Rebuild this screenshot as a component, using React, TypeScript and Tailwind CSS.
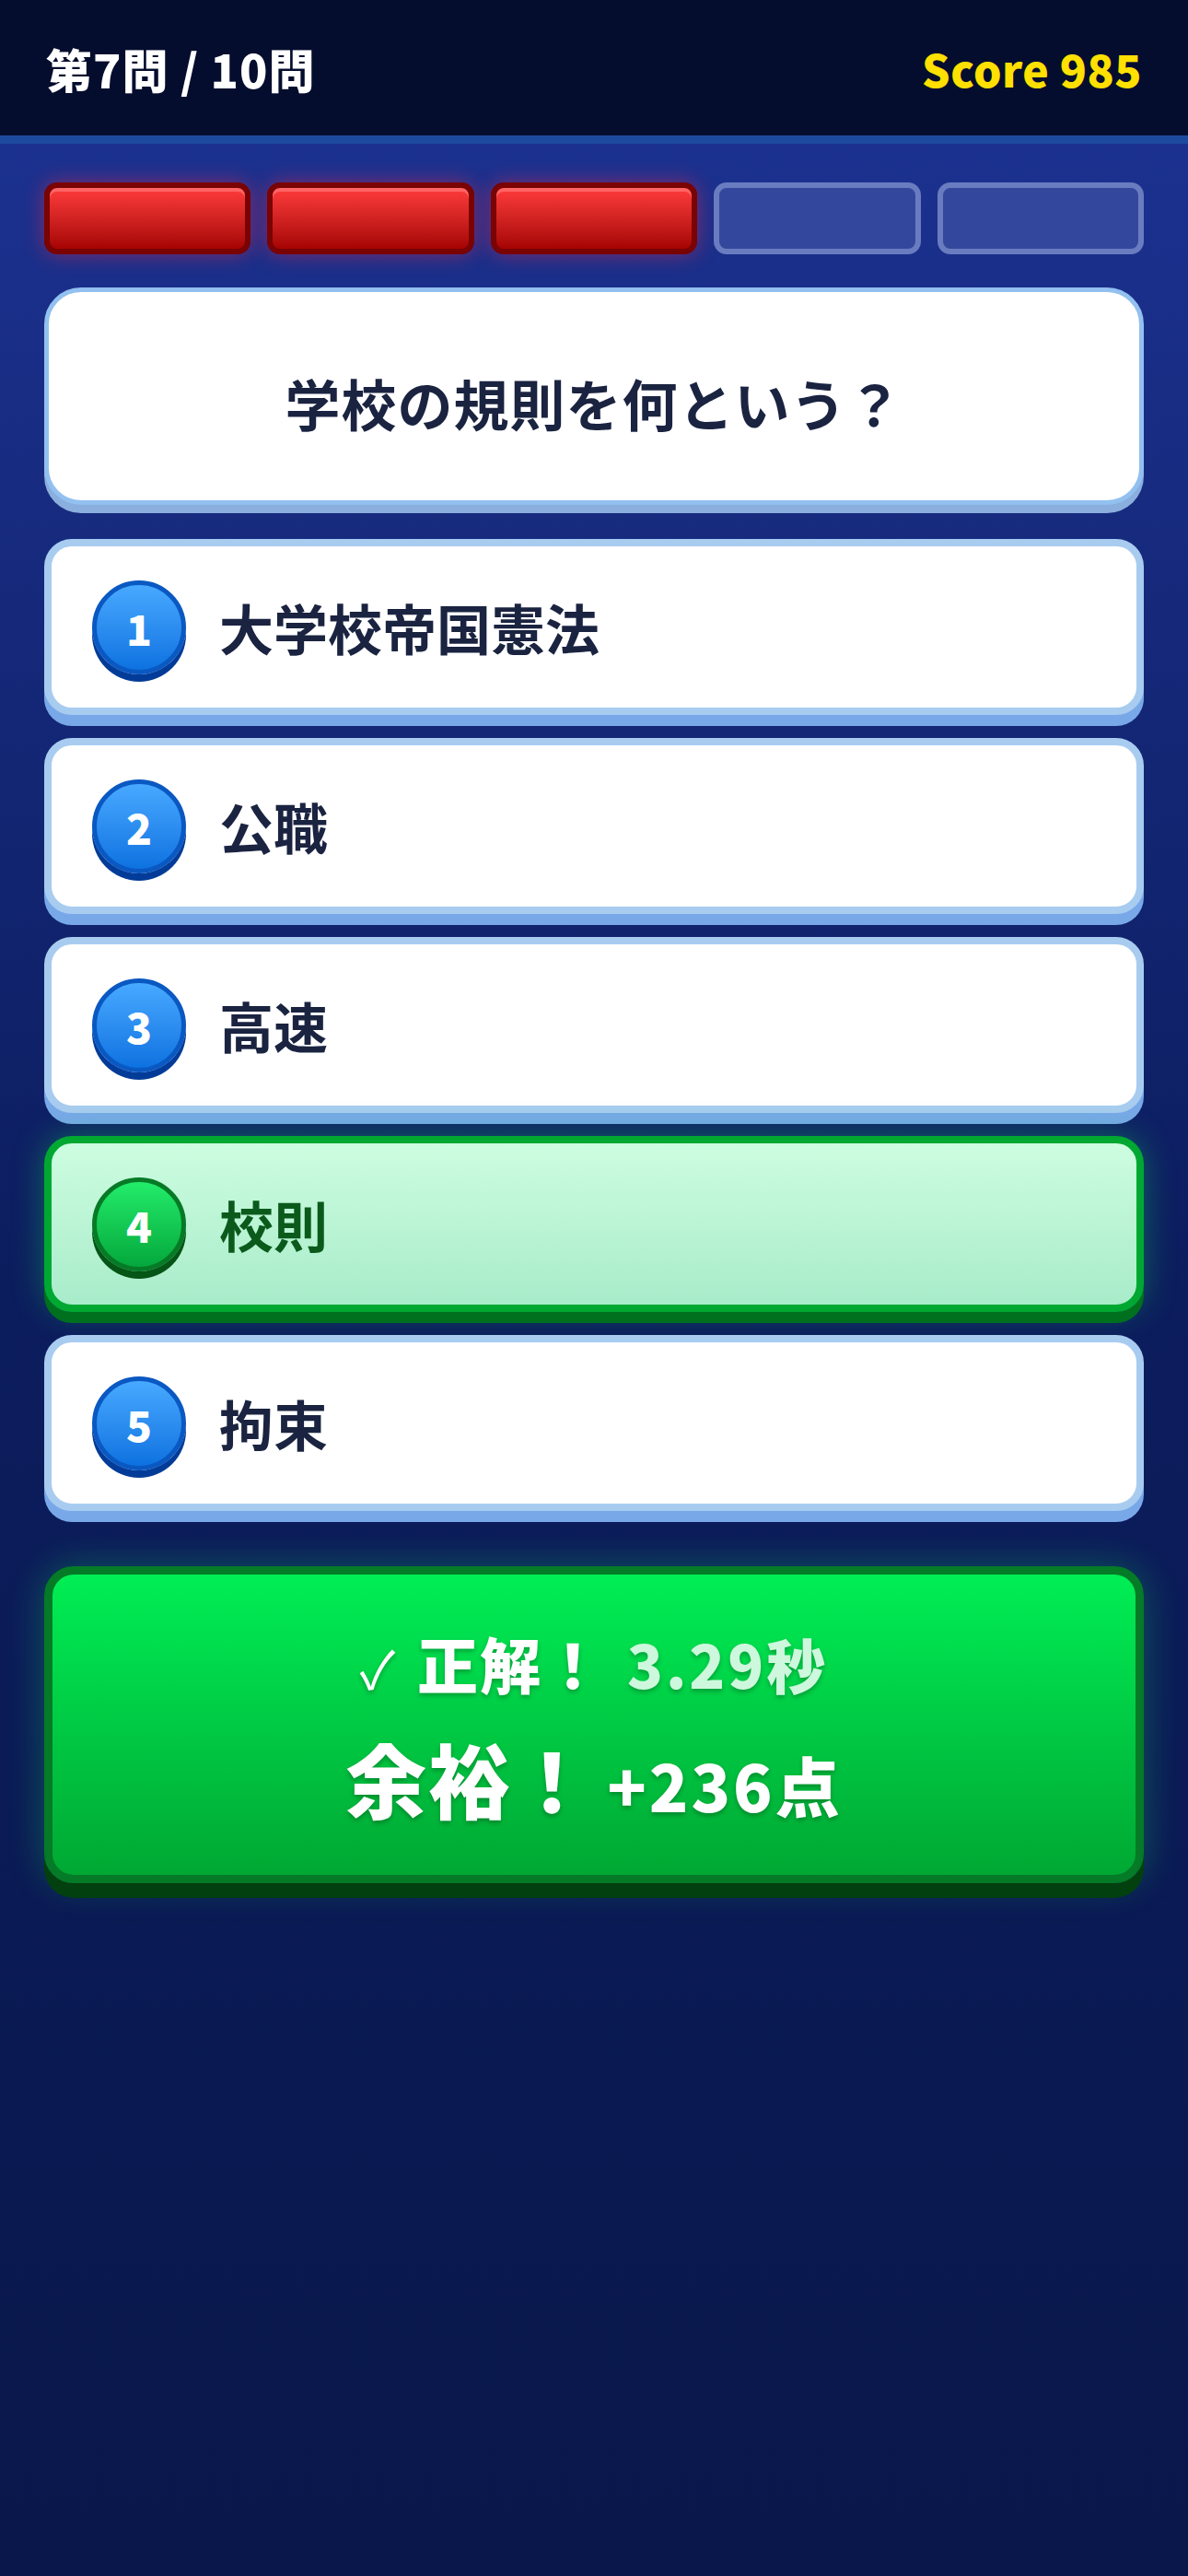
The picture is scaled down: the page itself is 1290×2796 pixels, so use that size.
const font = { fontFamily: '"Noto Sans CJK JP", "Noto Sans", sans-serif' };

const options = [
  { n: 1, label: "大学校帝国憲法" },
  { n: 2, label: "公職" },
  { n: 3, label: "高速" },
  { n: 4, label: "校則", correct: true },
  { n: 5, label: "拘束" },
];

function ProgressBar({ filled }: { filled: boolean }) {
  if (filled) {
    return (
      <div className="h-[78px] flex-1 rounded-[14px] border-[6px] border-[#7a0303] bg-gradient-to-b from-[#ff3b3b] to-[#a50303] shadow-[0_0_22px_rgba(255,40,70,0.45),inset_0_4px_0_rgba(255,120,120,0.7)]" />
    );
  }
  return (
    <div className="h-[78px] flex-1 rounded-[14px] border-[6px] border-[#6a7cc0] bg-[#33489c]" />
  );
}

function Badge({ n, correct }: { n: number; correct?: boolean }) {
  return (
    <div
      className={
        correct
          ? "flex h-[102px] w-[102px] shrink-0 items-center justify-center rounded-full border-[5px] border-[#067a26] bg-gradient-to-b from-[#22ec6a] to-[#04a83c] shadow-[0_8px_0_#045516]"
          : "flex h-[102px] w-[102px] shrink-0 items-center justify-center rounded-full border-[5px] border-[#0a58c2] bg-gradient-to-b from-[#47a9ff] to-[#0c72e0] shadow-[0_8px_0_#033c98]"
      }
    >
      <span className="text-[46px] font-black leading-none text-white">{n}</span>
    </div>
  );
}

function Option({ n, label, correct }: { n: number; label: string; correct?: boolean }) {
  return (
    <div
      className={
        correct
          ? "flex h-[191px] items-center gap-[36px] rounded-[30px] border-[8px] border-[#00a832] bg-gradient-to-b from-[#cdfde0] to-[#a8ecca] pl-[44px] shadow-[0_12px_0_#00701f,0_0_34px_rgba(20,230,90,0.35)]"
          : "flex h-[191px] items-center gap-[36px] rounded-[30px] border-[8px] border-[#a8ccf0] bg-white pl-[44px] shadow-[0_12px_0_#78a8e8]"
      }
    >
      <Badge n={n} correct={correct} />
      <span
        className={
          correct
            ? "text-[59px] font-bold leading-none text-[#0b5a1c]"
            : "text-[59px] font-bold leading-none text-[#1a2340]"
        }
      >
        {label}
      </span>
    </div>
  );
}

export default function App() {
  return (
    <div style={font} className="min-h-[2796px] w-full bg-gradient-to-b from-[#1e3496] via-[#0c1d5e] to-[#09174a]">
      <header className="flex h-[156px] items-center justify-between border-b-[9px] border-[#1d4a9e] bg-[#050d2e] px-[50px]">
        <span className="text-[50px] font-black leading-none tracking-[1px] text-white">第7問 / 10問</span>
        <span className="text-[48px] font-black leading-none tracking-[0.5px] text-[#ffe000]">Score 985</span>
      </header>

      <main className="flex flex-col px-[48px] pt-[42px]">
        <div className="flex gap-[18px]">
          <ProgressBar filled />
          <ProgressBar filled />
          <ProgressBar filled />
          <ProgressBar filled={false} />
          <ProgressBar filled={false} />
        </div>

        <div className="mt-[36px] flex h-[236px] items-center justify-center rounded-[40px] border-[5px] border-[#92c0f0] bg-white pt-[14px] shadow-[0_9px_0_#8aaedd]">
          <h1 className="text-[60px] font-bold leading-none tracking-[1px] text-[#1a2340]">学校の規則を何という？</h1>
        </div>

        <div className="mt-[37px] flex flex-col gap-[25px]">
          {options.map((o) => (
            <Option key={o.n} n={o.n} label={o.label} correct={o.correct} />
          ))}
        </div>

        <div className="mt-[60px] flex h-[344px] flex-col items-center justify-center gap-[48px] rounded-[32px] border-[9px] border-[#057a27] bg-gradient-to-b from-[#00ee55] to-[#00a833] shadow-[0_16px_0_#03400f,0_0_40px_rgba(20,230,90,0.3)]">
          <div className="flex items-baseline gap-[24px] leading-none [text-shadow:0_3px_5px_rgba(0,0,0,0.25)]">
            <span className="text-[56px] font-normal text-white">✓</span>
            <span className="text-[66px] font-black tracking-[2px] text-white">正解！</span>
            <span className="text-[64px] font-black tracking-[3px] text-[#cdf8dd]">3.29秒</span>
          </div>
          <div className="flex items-baseline gap-[14px] leading-none [text-shadow:0_3px_5px_rgba(0,0,0,0.25)]">
            <span className="text-[88px] font-black tracking-[2px] text-white">余裕！</span>
            <span className="text-[70px] font-black tracking-[3px] text-white">+236点</span>
          </div>
        </div>
      </main>
    </div>
  );
}
